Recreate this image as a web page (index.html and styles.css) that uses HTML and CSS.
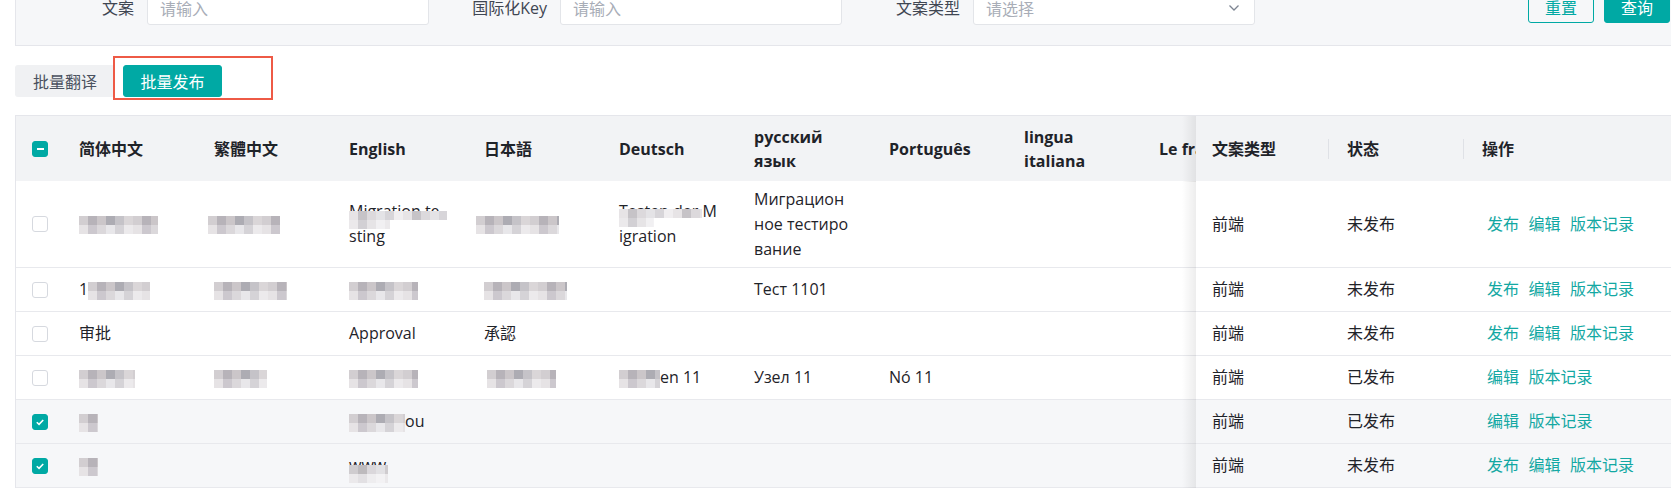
FILE: index.html
```html
<!DOCTYPE html>
<html lang="zh-CN">
<head>
<meta charset="utf-8">
<title>文案管理</title>
<link rel="stylesheet" href="styles.css">
</head>
<body>
<div class="page">
  <div class="filter">
    <div class="field"><label class="field-label">文案</label><div class="input">请输入</div></div>
    <div class="field"><label class="field-label">国际化Key</label><div class="input">请输入</div></div>
    <div class="field"><label class="field-label">文案类型</label><div class="input select"><span>请选择</span><svg class="chev" width="12" height="8" viewBox="0 0 12 8"><path d="M1.5 1.5 L6 6 L10.5 1.5" fill="none" stroke="#7d8592" stroke-width="1.3"/></svg></div></div>
    <div class="actions">
      <button class="btn btn-outline">重置</button>
      <button class="btn btn-primary">查询</button>
    </div>
  </div>

  <div class="toolbar">
    <button class="btn btn-gray">批量翻译</button>
    <button class="btn btn-primary btn-batch">批量发布</button>
    <span class="highlight"></span>
  </div>

  <div class="table-wrap">
    <table class="grid">
      <colgroup>
        <col class="col-cb">
        <col class="col-lang"><col class="col-lang"><col class="col-lang"><col class="col-lang">
        <col class="col-lang"><col class="col-lang"><col class="col-lang"><col class="col-lang">
        <col class="col-clip">
        <col class="col-fx"><col class="col-fx"><col class="col-op">
      </colgroup>
      <thead>
        <tr>
          <th class="c-cb"><span class="cb cb-ind"></span></th>
          <th>简体中文</th>
          <th>繁體中文</th>
          <th>English</th>
          <th>日本語</th>
          <th>Deutsch</th>
          <th>русский язык</th>
          <th>Português</th>
          <th>lingua italiana</th>
          <th class="clip">Le français</th>
          <th class="fx fx-first sep">文案类型</th>
          <th class="fx sep">状态</th>
          <th class="fx">操作</th>
        </tr>
      </thead>
      <tbody>
        <tr class="r-tall">
          <td class="c-cb"><span class="cb"></span></td>
          <td><span class="mz w79"></span></td>
          <td><span class="mz w72 shift-6"></span></td>
          <td><div class="blur">Migration te<br>sting<span class="mz-over ov-en"></span></div></td>
          <td><span class="mz w83 shift-8"></span></td>
          <td><div class="blur">Testen der M<br>igration<span class="mz-over ov-de"></span></div></td>
          <td>Миграцион<br>ное тестиро<br>вание</td>
          <td></td>
          <td></td>
          <td class="clip"></td>
          <td class="fx fx-first">前端</td>
          <td class="fx">未发布</td>
          <td class="fx"><span class="ops"><a>发布</a><a>编辑</a><a>版本记录</a></span></td>
        </tr>
        <tr>
          <td class="c-cb"><span class="cb"></span></td>
          <td>1<span class="mz w62"></span></td>
          <td><span class="mz w73"></span></td>
          <td><span class="mz w69"></span></td>
          <td><span class="mz w83"></span></td>
          <td></td>
          <td>Тест 1101</td>
          <td></td>
          <td></td>
          <td class="clip"></td>
          <td class="fx fx-first">前端</td>
          <td class="fx">未发布</td>
          <td class="fx"><span class="ops"><a>发布</a><a>编辑</a><a>版本记录</a></span></td>
        </tr>
        <tr>
          <td class="c-cb"><span class="cb"></span></td>
          <td>审批</td>
          <td></td>
          <td>Approval</td>
          <td>承認</td>
          <td></td>
          <td></td>
          <td></td>
          <td></td>
          <td class="clip"></td>
          <td class="fx fx-first">前端</td>
          <td class="fx">未发布</td>
          <td class="fx"><span class="ops"><a>发布</a><a>编辑</a><a>版本记录</a></span></td>
        </tr>
        <tr>
          <td class="c-cb"><span class="cb"></span></td>
          <td><span class="mz w56"></span></td>
          <td><span class="mz w53"></span></td>
          <td><span class="mz w69"></span></td>
          <td><span class="mz w69 shift-p3"></span></td>
          <td><span class="mz w41"></span>en 11</td>
          <td>Узел 11</td>
          <td>Nó 11</td>
          <td></td>
          <td class="clip"></td>
          <td class="fx fx-first">前端</td>
          <td class="fx">已发布</td>
          <td class="fx"><span class="ops"><a>编辑</a><a>版本记录</a></span></td>
        </tr>
        <tr class="selected">
          <td class="c-cb"><span class="cb cb-on"><svg viewBox="0 0 16 16"><path d="M4.3 8.3 L6.9 10.7 L11.7 5.7" fill="none" stroke="#fff" stroke-width="1.8"/></svg></span></td>
          <td><span class="mz w19"></span></td>
          <td></td>
          <td><span class="mz w56"></span>ou</td>
          <td></td>
          <td></td>
          <td></td>
          <td></td>
          <td></td>
          <td class="clip"></td>
          <td class="fx fx-first">前端</td>
          <td class="fx">已发布</td>
          <td class="fx"><span class="ops"><a>编辑</a><a>版本记录</a></span></td>
        </tr>
        <tr class="selected">
          <td class="c-cb"><span class="cb cb-on"><svg viewBox="0 0 16 16"><path d="M4.3 8.3 L6.9 10.7 L11.7 5.7" fill="none" stroke="#fff" stroke-width="1.8"/></svg></span></td>
          <td><span class="mz w19"></span></td>
          <td></td>
          <td><div class="blur">www<span class="mz-over mz-full ov-www"></span></div></td>
          <td></td>
          <td></td>
          <td></td>
          <td></td>
          <td></td>
          <td class="clip"></td>
          <td class="fx fx-first">前端</td>
          <td class="fx">未发布</td>
          <td class="fx"><span class="ops"><a>发布</a><a>编辑</a><a>版本记录</a></span></td>
        </tr>
      </tbody>
    </table>
  </div>
</div>
</body>
</html>
```

FILE: styles.css
```css
* { box-sizing: border-box; }

html, body {
  margin: 0;
  overflow: hidden;
  background: #ffffff;
}

body {
  font-family: "Open Sans", "Noto Sans CJK SC", sans-serif;
  font-size: 16px;
  color: #1f2329;
}

.page {
  width: 1690px;
  padding-left: 15px;
}

/* ---------- filter panel ---------- */
.filter {
  margin-top: -30px;
  display: flex;
  align-items: flex-start;
  padding: 20px 19px 20px 18px;
  background: #f6f7f9;
  border: 1px solid #e5e6eb;
}

.field {
  display: flex;
  align-items: center;
  margin-right: 18px;
}

.field-label {
  width: 100px;
  margin-right: 13px;
  text-align: right;
  color: #3f4652;
  line-height: 24px;
}

.input {
  width: 282px;
  height: 34px;
  padding: 0 14px 0 12px;
  display: flex;
  align-items: center;
  justify-content: space-between;
  background: #ffffff;
  border: 1px solid #e3e5e9;
  border-radius: 3px;
  color: #a8adb7;
}

.chev { display: block; }

.actions {
  margin-left: auto;
  display: flex;
  gap: 10px;
}

.btn {
  height: 32px;
  padding: 0;
  font-family: inherit;
  font-size: 16px;
  border-radius: 3px;
  border: 1px solid transparent;
  cursor: pointer;
}

.actions .btn { width: 66px; }

.btn-outline {
  background: transparent;
  border-color: #00a9a4;
  color: #00a9a4;
}

.btn-primary {
  background: #00a9a4;
  border-color: #00a9a4;
  color: #ffffff;
}

/* ---------- toolbar ---------- */
.toolbar {
  position: relative;
  margin-top: 19px;
  display: flex;
  gap: 8px;
}

.btn-gray {
  width: 100px;
  background: #f0f1f3;
  color: #4b5260;
}

.btn-batch { width: 99px; }

.highlight {
  position: absolute;
  left: 98px;
  top: -9px;
  width: 160px;
  height: 44px;
  border: 2px solid #ee5a46;
  pointer-events: none;
}

/* ---------- table ---------- */
.table-wrap {
  margin-top: 18px;
  border-top: 1px solid #e5e6eb;
  border-left: 1px solid #e5e6eb;
}

.grid {
  table-layout: fixed;
  border-collapse: separate;
  border-spacing: 0;
  width: 1674px;
}

.col-cb { width: 47px; }
.col-lang { width: 135px; }
.col-clip { width: 53px; }
.col-fx { width: 135px; }
.col-op { width: 224px; }

.grid th {
  height: 65px;
  padding: 0 16px;
  background: #f2f3f5;
  font-weight: 700;
  line-height: 24px;
  text-align: left;
  vertical-align: middle;
  color: #1f2329;
}

.grid td {
  padding: 0 16px;
  line-height: 25px;
  vertical-align: middle;
  border-bottom: 1px solid #e8e9ed;
  background: #ffffff;
  white-space: nowrap;
}

.grid tbody tr { height: 44px; }
.grid tbody tr.r-tall { height: 87px; }
.grid tbody tr.selected td { background: #f6f7f9; }

.grid .clip {
  overflow: hidden;
  white-space: nowrap;
  padding-right: 0;
}

.grid .fx { position: relative; }

.grid .fx-first::before {
  content: "";
  position: absolute;
  left: -14px;
  top: 0;
  bottom: -1px;
  width: 14px;
  background: linear-gradient(90deg, rgba(0, 0, 0, 0), rgba(0, 0, 0, 0.07));
}

.grid th.sep::after {
  content: "";
  position: absolute;
  right: 2px;
  top: 50%;
  width: 1px;
  height: 20px;
  margin-top: -10px;
  background: #dfe1e6;
}

/* checkbox */
.c-cb { padding-right: 0 !important; }

.cb {
  display: block;
  width: 16px;
  height: 16px;
  border: 1px solid #d6d9df;
  border-radius: 3px;
  background: #ffffff;
}

.cb svg { display: block; width: 14px; height: 14px; }

.cb-on {
  background: #00a9a4;
  border-color: #00a9a4;
}

.cb-ind {
  position: relative;
  background: #00a9a4;
  border-color: #00a9a4;
}

.cb-ind::after {
  content: "";
  position: absolute;
  left: 3.5px;
  top: 6px;
  width: 7px;
  height: 2px;
  background: #ffffff;
}

/* operation links */
.ops {
  display: inline-flex;
  gap: 9.5px;
  padding-left: 5px;
}

.ops a {
  color: #13a8a3;
  text-decoration: none;
  cursor: pointer;
}

/* pixelated (masked) content */
.mz {
  display: inline-block;
  vertical-align: middle;
  height: 18px;
  background:
    repeating-linear-gradient(90deg, #d2ced1 0 9px, #b7b3b9 9px 18px, #cbc6c9 18px 27px, #adacb3 27px 36px, #c5c3c8 36px 45px, #dad6d8 45px 54px) 0 0 / 100% 9px no-repeat,
    repeating-linear-gradient(90deg, #e6e3e5 0 9px, #ccc8ce 9px 18px, #dbd8db 18px 27px, #e8e7ea 27px 36px, #d5d3d7 36px 45px, #eceaec 45px 54px) 0 9px / 100% 9px no-repeat;
}

.w19 { width: 19px; }
.w41 { width: 41px; }
.w53 { width: 53px; }
.w56 { width: 56px; }
.w62 { width: 62px; }
.w69 { width: 69px; }
.w72 { width: 72px; }
.w73 { width: 73px; }
.w79 { width: 79px; }
.w83 { width: 83px; }

.shift-6 { margin-left: -6px; }
.shift-8 { margin-left: -8px; }
.shift-p3 { margin-left: 3px; }

.blur { position: relative; }

.mz-over {
  position: absolute;
  left: 0;
  background:
    repeating-linear-gradient(90deg, #e7e4e6 0 9px, #c6c3c7 9px 18px, #dcd9dc 18px 27px, #e4e3e6 27px 36px, #d7d5d9 36px 45px, #f0eef0 45px 54px) 0 0 / 100% 9px no-repeat,
    repeating-linear-gradient(90deg, #ebe9eb 0 9px, #d2d0d4 9px 18px, #e6e4e6 18px 27px, #f1f0f2 27px 36px) 0 9px / 42% 9px no-repeat;
}

.mz-full {
  background:
    repeating-linear-gradient(90deg, #cfcccf 0 9px, #bdbabd 9px 18px, #dad7db 18px 27px, #e2e1e4 27px 36px) 0 0 / 100% 9px no-repeat,
    repeating-linear-gradient(90deg, #ebe9eb 0 9px, #e2e0e3 9px 18px, #eeedef 18px 27px, #f3f2f4 27px 36px) 0 9px / 100% 9px no-repeat;
}

.ov-en { top: 12px; width: 98px; height: 18px; }
.ov-de { top: 10px; width: 83px; height: 18px; }
.ov-www { top: 12px; width: 39px; height: 18px; }
```
